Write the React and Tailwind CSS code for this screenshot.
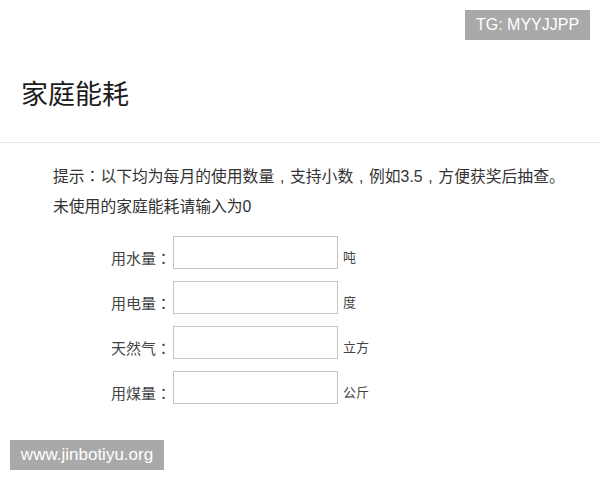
import React from "react";

const rows = [
  { label: "用水量", unit: "吨" },
  { label: "用电量", unit: "度" },
  { label: "天然气", unit: "立方" },
  { label: "用煤量", unit: "公斤" },
];

const cjk = { fontFamily: '"Liberation Sans", "Noto Sans CJK SC", sans-serif' };
const tc = { fontFamily: '"Noto Sans CJK TC", sans-serif' };

// centred full-width colon, as in the picture
const Colon = () => <span style={tc}>：</span>;
// comma sits on the baseline, centred in a full-width cell
const Comma = () => <span className="inline-block w-[1em] text-center">,</span>;

export default function App() {
  return (
    <div className="relative w-[600px] h-[480px] bg-white overflow-hidden" style={cjk}>
      {/* HEADER */}
      <header className="h-[143px] border-b border-[#e6e6e6] pl-[21px] pt-[77px]">
        <h1 className="text-[27px] leading-[36px] text-[#1c1c1c]">家庭能耗</h1>
      </header>

      {/* TIPS */}
      <div className="pl-[53px] mt-[17px] text-[15.8px] leading-[31px] text-[#333]">
        <p className="h-[31px]">
          提示<Colon />以下均为每月的使用数量<Comma />支持小数<Comma />例如3.5
          <Comma />方便获奖后抽查。
        </p>
        <p className="h-[31px]">未使用的家庭能耗请输入为0</p>
      </div>

      {/* FORM */}
      <div className="pl-[53px] mt-[14px] flex flex-col gap-[12px]">
        {rows.map((r) => (
          <div key={r.label} className="flex items-end h-[33px]">
            <label className="w-[118px] text-right text-[15px] leading-[20px] text-[#444]">
              {r.label}
              <Colon />
            </label>
            <input
              type="text"
              className="ml-[2px] w-[165px] h-[33px] border border-[#c4c4c4] bg-white outline-none"
            />
            <span className="ml-[5px] text-[13px] leading-[22px] text-[#444]">{r.unit}</span>
          </div>
        ))}
      </div>

      {/* WATERMARKS */}
      <div className="absolute left-[465px] top-[10px] w-[125px] h-[30px] bg-[#a9a9a9] text-white text-[16px] flex items-center justify-center">
        TG: MYYJJPP
      </div>
      <div className="absolute left-[10px] top-[440px] w-[154px] h-[30px] bg-[#a9a9a9] text-white text-[17px] flex items-center justify-center">
        www.jinbotiyu.org
      </div>
    </div>
  );
}
